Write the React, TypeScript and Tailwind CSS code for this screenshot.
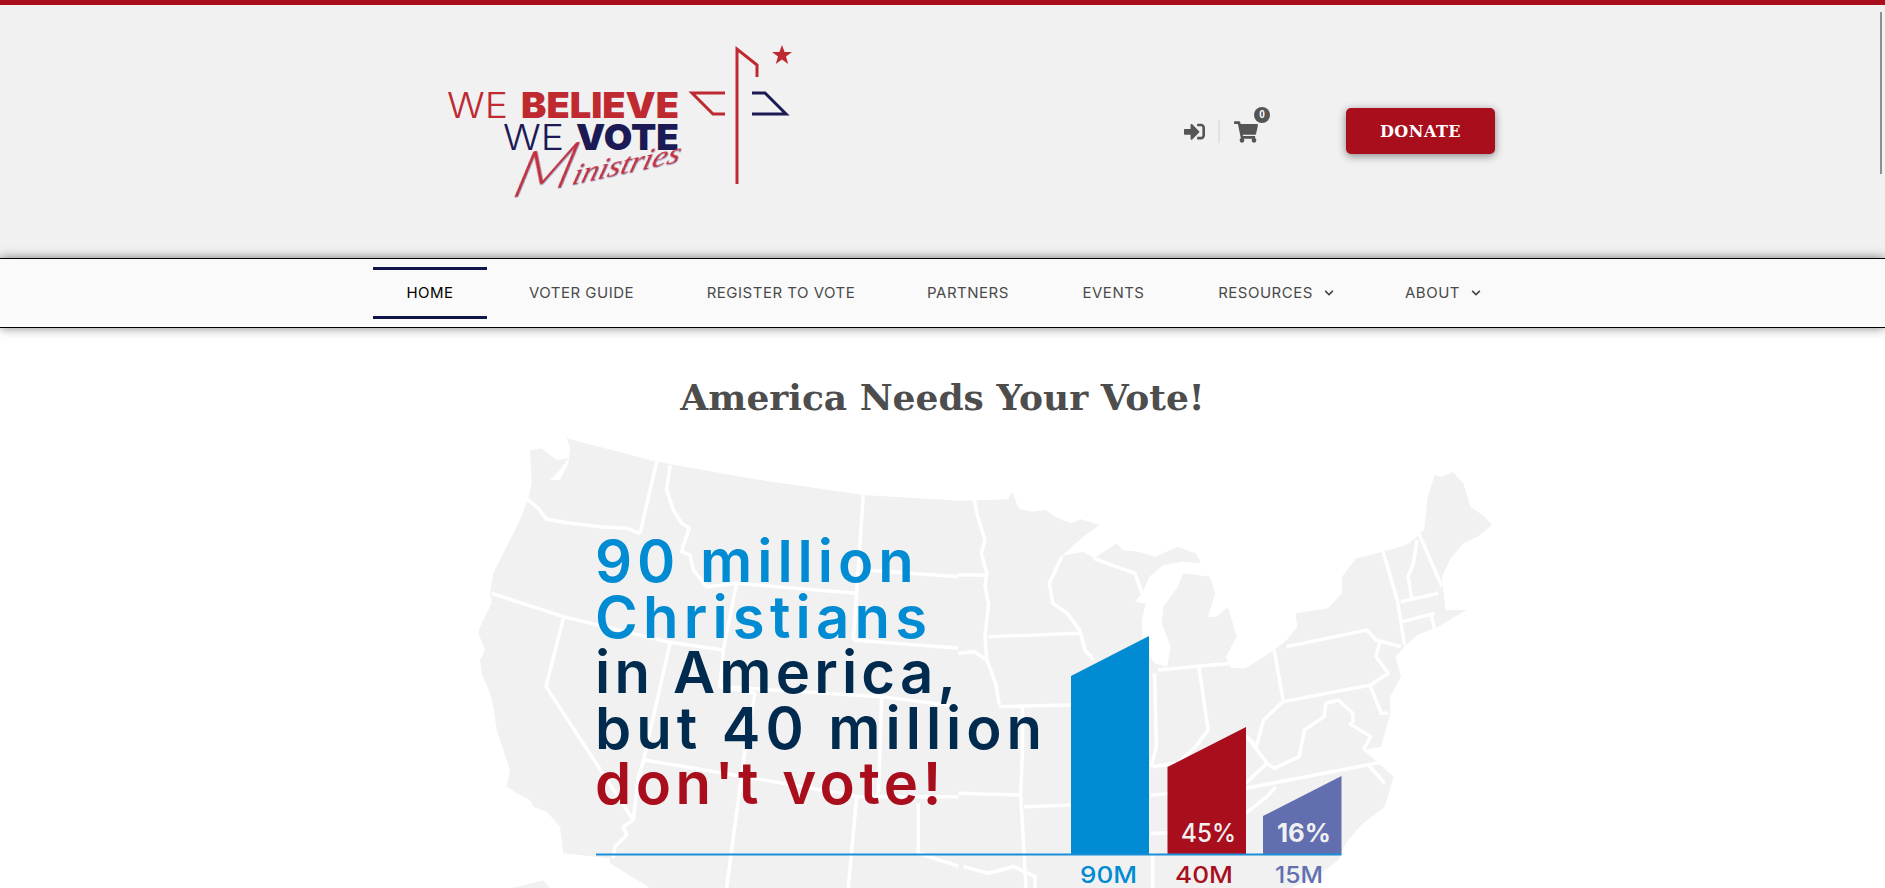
import React from 'react';
import { FaChevronDown, FaShoppingCart, FaSignInAlt } from 'react-icons/fa';

const SERIF = 'font-["DejaVu_Serif","Liberation_Serif",serif]';

const navItems = [
  { label: 'HOME', width: 'w-[114px]', active: true },
  { label: 'VOTER GUIDE', width: 'w-[171px]' },
  { label: 'REGISTER TO VOTE', width: 'w-[210px]' },
  { label: 'PARTNERS', width: 'w-[146px]' },
  { label: 'EVENTS', width: 'w-[127px]' },
  { label: 'RESOURCES', width: 'w-[180px]', caret: true },
  { label: 'ABOUT', width: 'w-[136px]', caret: true },
];

// map traced in two halves that meet at x=960
const westLand =
  '320,25 590,95 900,150 1210,195 1500,212 1500,1374 570,1374 450,1300 450,1285 310,1270 300,1190 260,1145 220,1130 210,1110 170,1090 140,1070 150,1020 130,960 110,900 100,830 90,790 65,730 60,690 75,660 55,610 60,590 95,520 90,490 100,430 130,370 180,270 205,205 215,160 210,60 245,55 290,90 325,85 300,120 270,150 300,150 325,100 330,55';
const eastLand =
  '-5,212 135,208 145,185 165,235 200,245 240,240 270,262 310,280 340,268 390,285 345,320 285,378 345,365 375,385 440,340 455,360 500,365 545,380 610,350 660,370 675,400 625,395 570,405 530,440 510,490 490,515 520,520 510,570 510,640 545,700 580,710 590,650 565,580 570,530 610,470 625,430 700,440 715,490 700,540 695,560 720,560 750,530 770,600 775,620 745,680 760,715 800,715 880,660 915,630 945,590 940,550 1030,535 1070,490 1070,440 1110,385 1185,365 1250,345 1280,320 1300,300 1310,200 1330,135 1350,140 1380,125 1410,160 1430,230 1470,260 1490,285 1450,320 1410,340 1375,385 1350,440 1355,490 1360,540 1420,540 1370,570 1340,590 1280,615 1245,650 1220,680 1235,740 1205,800 1205,850 1180,950 1130,960 1215,1040 1190,1130 1130,1180 1100,1215 1080,1240 1060,1290 1000,1340 930,1374 -5,1374';

const westBorders = [
  '200,205 235,235 260,268 330,280 420,290 500,295 540,310',
  '590,95 545,290 540,310',
  '630,105 620,180 640,240 665,280 688,295 670,345 665,365 690,375 700,420 740,470 830,460',
  '830,460 1190,490',
  '1210,195 1190,490 1180,630',
  '1210,420 1500,440',
  '1180,630 1500,655',
  '95,490 310,560 620,635 790,660',
  '830,460 790,660 780,770 885,790',
  '780,770 1265,800',
  '885,790 855,960 800,1374',
  '1265,800 1255,1100',
  '1265,800 1500,830',
  '555,990 850,1040 1200,1100 1500,1100',
  '1190,1100 1165,1374',
  '1375,1120 1375,1270 1500,1310',
  '310,565 258,770 520,1170 490,1190 500,1215 465,1250 460,1285',
  '630,640 550,995 535,1040 520,1170',
];

const eastBorders = [
  '40,210 50,260 70,330 60,370 75,430 70,470 80,520 70,620 75,690',
  '-5,435 70,435',
  '80,620 335,610',
  '-5,670 40,665 75,690 100,760 110,825',
  '110,830 310,825',
  '-5,1090 170,1095',
  '175,830 175,960 170,1095 185,1374',
  '180,1130 310,1125',
  '285,380 250,460 260,520 300,550 335,600 350,660 375,690',
  '375,385 490,430 510,490',
  '555,720 760,700',
  '545,730 550,950 535,1010',
  '670,715 695,900 660,950 610,1000 540,1010',
  '880,660 905,810',
  '915,650 1140,600 1165,630 1235,650',
  '905,815 1150,765 1200,730 1165,680 1175,640',
  '905,815 890,830 850,870 830,950 805,920 860,1000 880,1015 950,980 965,900 1020,860 1025,820 1060,810 1100,850 1100,880',
  '860,1000 800,1060',
  '800,1075 1190,995',
  '535,1095 800,1075',
  '800,1150 860,1100 885,1070',
  '535,1210 800,1205',
  '540,1270 540,1374',
  '1185,365 1225,510 1245,645',
  '1280,330 1270,400 1255,440 1265,505',
  '1285,310 1350,470',
  '1235,515 1340,490',
  '1240,575 1330,550',
  '1320,555 1330,600',
  '1150,770 1180,850 1200,850',
  '1090,880 1150,920 1130,960',
  '1140,1000 1190,1060',
  '10,1310 80,1330 150,1310 210,1340 210,1374',
];

const Logo = () => (
  <svg viewBox="440 43 360 177" className="w-[360px] h-[177px] shrink-0">
    <g fontFamily="Inter, sans-serif" fontSize="36">
      <text x="447" y="118" fill="#bf2a30" fontWeight="300" textLength="61" lengthAdjust="spacingAndGlyphs">WE</text>
      <text x="521" y="118" fill="#bf2a30" fontWeight="900" textLength="158" lengthAdjust="spacingAndGlyphs">BELIEVE</text>
      <text x="503" y="150" fill="#1c1a55" fontWeight="300" textLength="61" lengthAdjust="spacingAndGlyphs">WE</text>
      <text x="576" y="150" fill="#1c1a55" fontWeight="900" textLength="103" lengthAdjust="spacingAndGlyphs">VOTE</text>
    </g>
    <text
      transform="translate(510 198) rotate(-12) skewX(-28)"
      fill="#c4303a"
      fontFamily="'Liberation Serif', serif"
      fontStyle="italic"
      fontSize="27"
      textLength="172"
      lengthAdjust="spacingAndGlyphs"
      className="[filter:drop-shadow(1px_1px_0_#9a9cc8)]"
    >
      <tspan fontFamily="Lato, sans-serif" fontWeight="300" fontSize="58">M</tspan>inistries
    </text>
    <g fill="none" strokeWidth="3">
      <polyline points="737,184 737,49 757,65 757,77" stroke="#bf2a30" />
      <polyline points="725,93 692,93 713,114 725,114" stroke="#bf2a30" />
      <polyline points="752,93 765,93 786,114 752,114" stroke="#1c1a55" />
    </g>
    <polygon points="782,45 784.6,52 792,52 786,56.5 788.2,64 782,59.5 775.8,64 778,56.5 772,52 779.4,52" fill="#bf2a30" />
  </svg>
);

const Infographic = () => (
  <svg viewBox="0 328 1885 560" className="absolute inset-0 w-[1885px] h-[560px]">
    <g transform="translate(460 430) scale(0.3333)">
      <polygon points={westLand} fill="#f1f1f1" />
      <polygon points="155,1374 250,1352 270,1374" fill="#f1f1f1" />
      {westBorders.map((points) => (
        <polyline key={points} points={points} fill="none" stroke="#fff" strokeWidth="3.5" strokeLinejoin="round" vectorEffect="non-scaling-stroke" />
      ))}
    </g>
    <g transform="translate(960 430) scale(0.357 0.3333)">
      <polygon points={eastLand} fill="#f1f1f1" />
      {eastBorders.map((points) => (
        <polyline key={points} points={points} fill="none" stroke="#fff" strokeWidth="3.5" strokeLinejoin="round" vectorEffect="non-scaling-stroke" />
      ))}
    </g>

    {/* bars */}
    <polygon points="1071,676 1149,636 1149,854 1071,854" fill="#008bd2" />
    <polygon points="1167.5,767 1246,727 1246,854 1167.5,854" fill="#a90e1c" />
    <polygon points="1263,816 1341.5,776 1341.5,854 1263,854" fill="#616fb0" />
    <rect x="596" y="853.5" width="745.5" height="2" fill="#1a8fd8" />

    <g fontFamily="Inter, sans-serif" fontWeight="500">
      <text x="1181" y="842" fontSize="26" fill="#f1f1f1" textLength="55" lengthAdjust="spacingAndGlyphs">45%</text>
      <text x="1277" y="842" fontSize="26" fill="#f1f1f1" fontWeight="700" textLength="54" lengthAdjust="spacingAndGlyphs">16%</text>
      <text x="1080" y="883" fontSize="23" fill="#008bd2" textLength="57" lengthAdjust="spacingAndGlyphs">90M</text>
      <text x="1175" y="883" fontSize="23" fill="#a90e1c" textLength="58" lengthAdjust="spacingAndGlyphs">40M</text>
      <text x="1275" y="883" fontSize="23" fill="#616fb0" textLength="48" lengthAdjust="spacingAndGlyphs">15M</text>
    </g>
  </svg>
);

export default function App() {
  return (
    <div className="relative h-[888px] w-[1885px] overflow-hidden bg-white">
      <div className="h-[5px] bg-[#a90e1c]" />

      {/* Top header */}
      <header className="h-[253px] bg-[#f1f1f1] flex items-center pl-[440px]">
        <Logo />
        <FaSignInAlt className="ml-[384px] w-[21px] h-[21px] text-[#555555] shrink-0" />
        <div className="ml-[13px] w-[2px] h-[23px] bg-[#e2e2e2]" />
        <div className="relative ml-[14px]">
          <FaShoppingCart className="w-[24px] h-[22px] text-[#555555]" />
          <span className="absolute -top-[14px] -right-[12px] w-4 h-4 rounded-full bg-[#555555] text-white text-[10px] leading-4 font-bold text-center font-['Liberation_Sans',sans-serif]">
            0
          </span>
        </div>
        <button className={`ml-[88px] mb-[2px] pt-[2px] w-[149px] h-[46px] rounded-[5px] bg-[#a90e1c] text-white text-[16px] tracking-[0.5px] font-bold shadow-[0_2px_8px_rgba(0,0,0,0.45)] ${SERIF}`}>
          DONATE
        </button>
      </header>

      {/* Main nav */}
      <nav className="relative z-10 h-[70px] bg-[#fafafa] border-y border-black shadow-[0_0_10px_rgba(0,0,0,0.5)] flex items-center gap-[9px] pl-[373px] font-['Inter',sans-serif] text-[15px] tracking-[0.5px] text-[#4a4a4a]">
        {navItems.map((item) => (
          <a
            key={item.label}
            className={`flex items-center justify-center gap-[11px] self-stretch my-[8px] ${item.width} ${
              item.active ? 'border-y-[3px] border-[#10154a] text-black' : ''
            }`}
          >
            {item.label}
            {item.caret && <FaChevronDown className="w-[10px] h-[10px] text-[#444444]" />}
          </a>
        ))}
      </nav>

      {/* Infographic */}
      <main className="relative h-[560px] overflow-hidden">
        <Infographic />
        <div className="relative">
          <h1 className={`pt-[38px] text-center text-[36px] leading-[62px] font-bold text-[#4d4d4d] ${SERIF}`}>
            America Needs Your Vote!
          </h1>
          <div className="mt-[106px] pl-[595px] font-['Inter',sans-serif] text-[58px] leading-[55.5px] font-semibold">
            <p className="text-[#008bd2] tracking-[5px]">90 million</p>
            <p className="text-[#008bd2] tracking-[5.2px]">Christians</p>
            <p className="text-[#002a4e] tracking-[4.2px]">in America,</p>
            <p className="text-[#002a4e] tracking-[5px]">but 40 million</p>
            <p className="text-[#a90e1c] tracking-[4.5px]">don't vote!</p>
          </div>
        </div>
      </main>

      {/* scrollbar thumb */}
      <div className="absolute z-20 top-[12px] right-[3px] w-[2px] h-[162px] bg-[#8f8f8f]" />
    </div>
  );
}
